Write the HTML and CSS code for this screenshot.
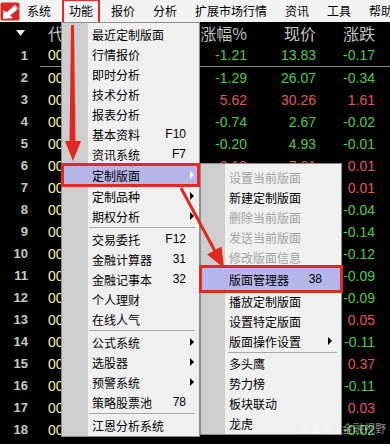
FILE: index.html
```html
<!DOCTYPE html>
<html lang="zh-CN">
<head>
<meta charset="utf-8">
<title>功能菜单</title>
<link rel="stylesheet" href="styles.css">
</head>
<body>
<div class="screen">
  <div class="menubar">
    <div class="logo">
      <svg width="20" height="22" viewBox="0 0 20 22">
        <rect x="0.5" y="2.5" width="19" height="18" rx="2" fill="#d52a26"/>
        <polygon points="15,5 18.5,8.5 10,15.5 13,18 3,19 3.5,10 6.5,12.5" fill="#ffffff"/>
        <polygon points="15,5 18.5,8.5 16,10.5" fill="#b9b9b9"/>
      </svg>
    </div>
    <div class="mb-item">系统</div>
    <div class="mb-item active">功能</div>
    <div class="mb-item">报价</div>
    <div class="mb-item">分析</div>
    <div class="mb-item">扩展市场行情</div>
    <div class="mb-item">资讯</div>
    <div class="mb-item">工具</div>
    <div class="mb-item">帮助</div>
  </div>

  <div class="table">
    <div class="thead">
      <span class="num"><svg class="sort" width="9" height="6" viewBox="0 0 9 6"><polygon points="0,0 9,0 4.5,6" fill="#e8e8e8"/></svg></span>
      <span class="code">代码</span>
      <span class="pct">涨幅%</span>
      <span class="price">现价</span>
      <span class="chg">涨跌</span>
    </div>
    <div class="row first"><span class="num">1</span><span class="code">000001</span><span class="pct dn">-1.21</span><span class="price dn">13.83</span><span class="chg dn">-0.17</span></div>
    <div class="divider"></div>
    <div class="row"><span class="num">2</span><span class="code">000002</span><span class="pct dn">-1.29</span><span class="price dn">26.07</span><span class="chg dn">-0.34</span></div>
    <div class="row"><span class="num">3</span><span class="code">000004</span><span class="pct up">5.62</span><span class="price up">30.26</span><span class="chg up">1.61</span></div>
    <div class="row"><span class="num">4</span><span class="code">000005</span><span class="pct dn">-0.74</span><span class="price dn">2.67</span><span class="chg dn">-0.02</span></div>
    <div class="row"><span class="num">5</span><span class="code">000006</span><span class="pct dn">-0.20</span><span class="price dn">4.93</span><span class="chg dn">-0.01</span></div>
    <div class="row"><span class="num">6</span><span class="code">000007</span><span class="pct up">0.13</span><span class="price up">7.81</span><span class="chg up">0.01</span></div>
    <div class="row"><span class="num">7</span><span class="code">000008</span><span class="pct up">0.27</span><span class="price up">3.74</span><span class="chg up">0.01</span></div>
    <div class="row"><span class="num">8</span><span class="code">000009</span><span class="pct dn">-0.45</span><span class="price dn">8.86</span><span class="chg dn">-0.04</span></div>
    <div class="row"><span class="num">9</span><span class="code">000010</span><span class="pct dn">-3.04</span><span class="price dn">4.46</span><span class="chg dn">-0.14</span></div>
    <div class="row"><span class="num">10</span><span class="code">000011</span><span class="pct dn">-1.05</span><span class="price dn">11.36</span><span class="chg dn">-0.12</span></div>
    <div class="row"><span class="num">11</span><span class="code">000012</span><span class="pct dn">-1.36</span><span class="price dn">6.52</span><span class="chg dn">-0.09</span></div>
    <div class="row"><span class="num">12</span><span class="code">000014</span><span class="pct dn">-0.70</span><span class="price dn">12.79</span><span class="chg dn">-0.09</span></div>
    <div class="row"><span class="num">13</span><span class="code">000016</span><span class="pct up">1.05</span><span class="price up">4.82</span><span class="chg up">0.05</span></div>
    <div class="row"><span class="num">14</span><span class="code">000017</span><span class="pct dn">-2.35</span><span class="price dn">4.57</span><span class="chg dn">-0.11</span></div>
    <div class="row"><span class="num">15</span><span class="code">000018</span><span class="pct up">2.98</span><span class="price up">12.78</span><span class="chg up">0.37</span></div>
    <div class="row"><span class="num">16</span><span class="code">000019</span><span class="pct dn">-1.33</span><span class="price dn">8.17</span><span class="chg dn">-0.11</span></div>
    <div class="row"><span class="num">17</span><span class="code">000020</span><span class="pct up">0.21</span><span class="price up">14.28</span><span class="chg up">0.03</span></div>
    <div class="row"><span class="num">18</span><span class="code">000021</span><span class="pct dn">-0.24</span><span class="price dn">8.23</span><span class="chg dn">-0.02</span></div>
  </div>

  <div class="menu main-menu">
    <div class="mi"><span class="lbl">最近定制版面</span></div>
    <div class="mi"><span class="lbl">行情报价</span></div>
    <div class="mi"><span class="lbl">即时分析</span></div>
    <div class="mi"><span class="lbl">技术分析</span></div>
    <div class="mi"><span class="lbl">报表分析</span></div>
    <div class="mi"><span class="lbl">基本资料</span><span class="key">F10</span></div>
    <div class="mi"><span class="lbl">资讯系统</span><span class="key">F7</span></div>
    <div class="mi hl"><span class="lbl">定制版面</span><span class="ar"></span></div>
    <div class="mi"><span class="lbl">定制品种</span><span class="ar"></span></div>
    <div class="mi"><span class="lbl">期权分析</span><span class="ar"></span></div>
    <div class="sep"></div>
    <div class="mi"><span class="lbl">交易委托</span><span class="key">F12</span></div>
    <div class="mi"><span class="lbl">金融计算器</span><span class="key">31</span></div>
    <div class="mi"><span class="lbl">金融记事本</span><span class="key">32</span></div>
    <div class="mi"><span class="lbl">个人理财</span></div>
    <div class="mi"><span class="lbl">在线人气</span></div>
    <div class="sep"></div>
    <div class="mi"><span class="lbl">公式系统</span><span class="ar"></span></div>
    <div class="mi"><span class="lbl">选股器</span><span class="ar"></span></div>
    <div class="mi"><span class="lbl">预警系统</span><span class="ar"></span></div>
    <div class="mi"><span class="lbl">策略股票池</span><span class="key">78</span></div>
    <div class="sep"></div>
    <div class="mi"><span class="lbl">江恩分析系统</span></div>
  </div>

  <div class="menu sub-menu">
    <div class="mi off"><span class="lbl">设置当前版面</span></div>
    <div class="mi"><span class="lbl">新建定制版面</span></div>
    <div class="mi off"><span class="lbl">删除当前版面</span></div>
    <div class="mi off"><span class="lbl">发送当前版面</span></div>
    <div class="mi off"><span class="lbl">修改版面信息</span></div>
    <div class="mi hl"><span class="lbl">版面管理器</span><span class="key">38</span></div>
    <div class="mi"><span class="lbl">播放定制版面</span></div>
    <div class="mi"><span class="lbl">设置特定版面</span></div>
    <div class="mi"><span class="lbl">版面操作设置</span><span class="ar"></span></div>
    <div class="sep"></div>
    <div class="mi"><span class="lbl">多头鹰</span></div>
    <div class="mi"><span class="lbl">势力榜</span></div>
    <div class="mi"><span class="lbl">板块联动</span></div>
    <div class="mi"><span class="lbl">龙虎</span></div>
  </div>

  <svg class="annot" width="390" height="444" viewBox="0 0 390 444">
    <polygon points="71,25 74,25 75.5,144 69.5,144" fill="#e0281e"/>
    <polygon points="65,141 81,141 73,161" fill="#e0281e"/>
    <line x1="181" y1="188" x2="216" y2="253" stroke="#e0281e" stroke-width="3"/>
    <polygon points="221.5,246.5 207,254.5 224,268" fill="#e0281e"/>
  </svg>

  <div class="watermark">头条号 / 金融视野</div>
</div>
</body>
</html>
```

FILE: styles.css
```css
* {
  box-sizing: border-box;
  margin: 0;
  padding: 0;
}

html,
body {
  width: 390px;
  height: 444px;
  overflow: hidden;
  background: #000;
}

body {
  font-family: "Noto Sans CJK SC", "Liberation Sans", sans-serif;
}

.screen {
  position: relative;
  width: 390px;
  height: 444px;
  overflow: hidden;
  background: #000;
}

/* ---------- menu bar ---------- */
.menubar {
  display: flex;
  height: 22px;
  background: #f3f3f3;
  white-space: nowrap;
  font-size: 12px;
  color: #000;
}

.logo {
  width: 18px;
  flex: none;
  overflow: visible;
}

.logo svg {
  display: block;
}

.mb-item {
  flex: none;
  padding: 0 9px;
  line-height: 22px;
}

.mb-item.active {
  position: relative;
  margin: 0 2px;
  padding: 0 7px;
}

.mb-item.active::after {
  content: "";
  position: absolute;
  left: 0;
  right: 0;
  top: -1px;
  bottom: -2px;
  border: 2px solid #dc2d22;
}

/* ---------- quote table ---------- */
.table {
  font-family: "Liberation Sans", Arial, sans-serif;
}

.thead,
.row {
  display: grid;
  grid-template-columns: 28px 20px 60px 139px 69px 59px;
  white-space: nowrap;
}

.thead {
  height: 23px;
  line-height: 23px;
  font-family: "Noto Sans CJK SC", sans-serif;
  font-size: 16px;
  color: #c4c4c4;
}

.thead .num {
  display: flex;
  justify-content: flex-end;
  align-items: center;
  padding-right: 3px;
}

.sort {
  display: block;
  margin-top: -2px;
}

.row {
  height: 22px;
  line-height: 22px;
  font-size: 14px;
}

.row.first {
  height: 21px;
  line-height: 21px;
}

.divider {
  height: 1px;
  margin-left: 40px;
  background: #8c8c8c;
}

.row .num {
  text-align: right;
  font-weight: bold;
  font-size: 13px;
  color: #c8c8c8;
}

.code {
  grid-column: 3;
  overflow: hidden;
}

.row .code {
  color: #f4f4b0;
}

.pct,
.price,
.chg {
  text-align: right;
}

.up {
  color: #e25858;
}

.dn {
  color: #4ccc4c;
}

/* ---------- dropdown menus ---------- */
.menu {
  position: absolute;
  border: 1px solid #8e8e8e;
  font-family: "Noto Sans CJK SC", sans-serif;
  font-size: 12px;
  color: #000;
}

.main-menu {
  left: 61px;
  top: 22px;
  width: 139px;
  padding: 1px 0;
  background: linear-gradient(to right, #cecece 0 26px, #f0f0f0 26px);
}

.sub-menu {
  left: 200px;
  top: 163px;
  width: 142px;
  padding: 3px 0 1px;
  background: linear-gradient(to right, #cecece 0 24px, #f0f0f0 24px);
}

.mi {
  display: grid;
  grid-template-columns: 1fr auto 13px;
  align-items: center;
  height: 20px;
  padding-left: 30px;
  white-space: nowrap;
}

.sub-menu .mi {
  grid-template-columns: 1fr auto 19px;
  padding-left: 28px;
}

.mi .lbl {
  grid-column: 1;
}

.mi .key {
  grid-column: 2;
  font-family: "Liberation Sans", Arial, sans-serif;
  font-size: 12px;
}

.mi .ar {
  grid-column: 3;
  width: 0;
  height: 0;
  margin-left: 4px;
  border-left: 4px solid #000;
  border-top: 4px solid transparent;
  border-bottom: 4px solid transparent;
}

.sub-menu .mi .ar {
  margin-left: 6px;
}

.mi.off {
  color: #a3a3a3;
}

.mi.hl {
  height: 22px;
  background: #b6b6e8;
  outline: 3px solid #dc2d22;
  outline-offset: -2px;
}

.sub-menu .mi.hl {
  height: 24px;
  outline-offset: -1px;
}

.mi.hl .ar {
  border-left-color: #ffffff;
}

.sep {
  display: flex;
  align-items: center;
  height: 3px;
  margin: 0 4px 0 27px;
}

.sep::before {
  content: "";
  flex: 1;
  height: 1px;
  background: #a8a8a8;
}

.sub-menu .sep {
  height: 2px;
  margin-left: 27px;
}

/* ---------- annotations ---------- */
.annot {
  position: absolute;
  left: 0;
  top: 0;
  pointer-events: none;
}

.watermark {
  position: absolute;
  right: 4px;
  bottom: 8px;
  font-family: "Noto Sans CJK SC", sans-serif;
  font-size: 11px;
  color: rgba(255, 255, 255, 0.55);
  white-space: nowrap;
}
```
